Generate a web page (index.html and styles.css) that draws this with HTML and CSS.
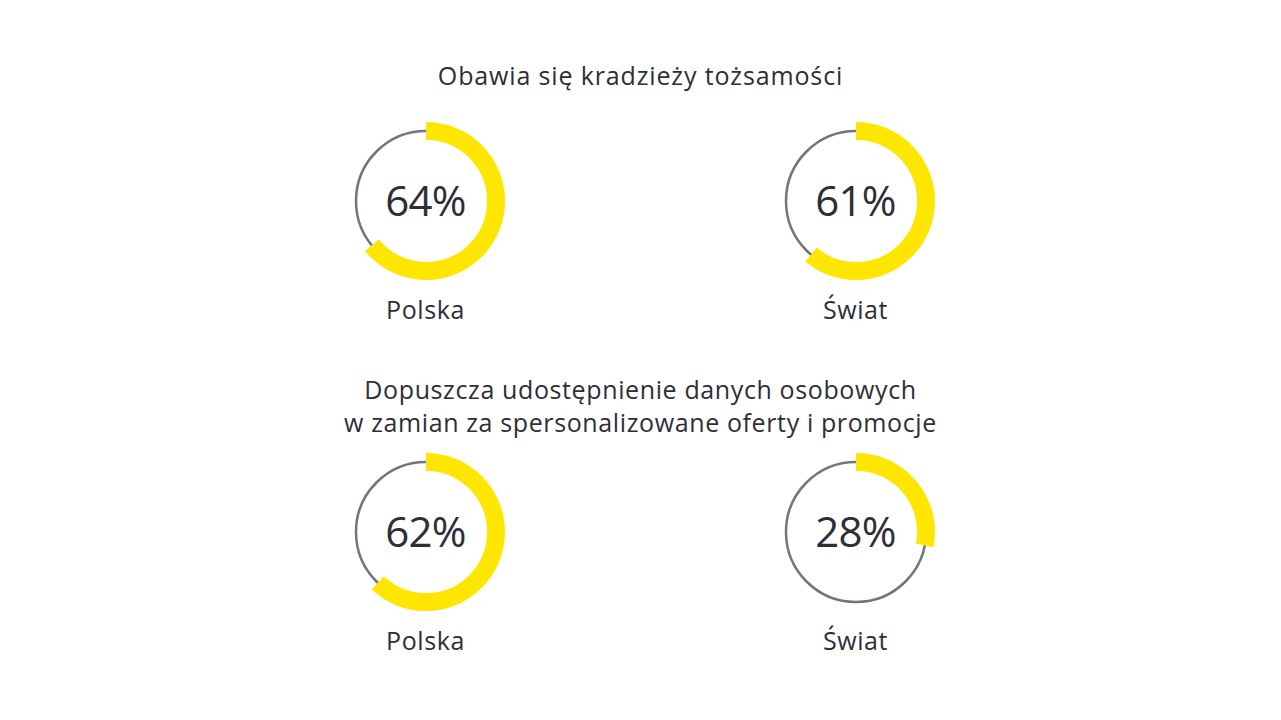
FILE: index.html
```html
<!DOCTYPE html>
<html lang="pl">
<head>
<meta charset="utf-8">
<title>Kradzież tożsamości</title>
<link rel="stylesheet" href="styles.css">
</head>
<body>
<main class="page">
  <section class="block block-first">
    <h2 class="title">Obawia się kradzieży tożsamości</h2>
    <div class="pair">
      <figure class="stat">
        <div class="donut">
          <svg viewBox="0 0 160 160" width="160" height="160" aria-hidden="true">
            <circle class="track" cx="80" cy="80" r="70"/>
            <circle class="value" cx="80" cy="80" r="70" style="stroke-dasharray: 281.5 439.9"/>
          </svg>
          <span class="num">64%</span>
        </div>
        <figcaption class="label">Polska</figcaption>
      </figure>
      <figure class="stat">
        <div class="donut">
          <svg viewBox="0 0 160 160" width="160" height="160" aria-hidden="true">
            <circle class="track" cx="80" cy="80" r="70"/>
            <circle class="value" cx="80" cy="80" r="70" style="stroke-dasharray: 268.3 439.9"/>
          </svg>
          <span class="num">61%</span>
        </div>
        <figcaption class="label">Świat</figcaption>
      </figure>
    </div>
  </section>
  <section class="block block-second">
    <h2 class="title">Dopuszcza udostępnienie danych osobowych<br>w zamian za spersonalizowane oferty i promocje</h2>
    <div class="pair">
      <figure class="stat">
        <div class="donut">
          <svg viewBox="0 0 160 160" width="160" height="160" aria-hidden="true">
            <circle class="track" cx="80" cy="80" r="70"/>
            <circle class="value" cx="80" cy="80" r="70" style="stroke-dasharray: 272.7 439.9"/>
          </svg>
          <span class="num">62%</span>
        </div>
        <figcaption class="label">Polska</figcaption>
      </figure>
      <figure class="stat">
        <div class="donut">
          <svg viewBox="0 0 160 160" width="160" height="160" aria-hidden="true">
            <circle class="track" cx="80" cy="80" r="70"/>
            <circle class="value" cx="80" cy="80" r="70" style="stroke-dasharray: 123.2 439.9"/>
          </svg>
          <span class="num">28%</span>
        </div>
        <figcaption class="label">Świat</figcaption>
      </figure>
    </div>
  </section>
</main>
</body>
</html>
```

FILE: styles.css
```css
html, body {
  margin: 0;
  padding: 0;
  background: #ffffff;
}

body {
  font-family: "Open Sans", "Liberation Sans", sans-serif;
  color: #2e2e38;
}

.page {
  width: 860px;
  margin: 0 auto;
  padding-top: 60px;
}

.block {
  display: flex;
  flex-direction: column;
  align-items: center;
}

.block-second {
  margin-top: 49px;
}

.title {
  margin: 0;
  font-weight: 400;
  font-size: 25px;
  line-height: 33px;
  letter-spacing: 0.62px;
  text-align: center;
}

.block-first .title {
  line-height: 30px;
  letter-spacing: 0.86px;
}

.pair {
  width: 100%;
  display: grid;
  grid-template-columns: 1fr 1fr;
  margin-top: 31px;
}

.block-second .pair {
  margin-top: 13px;
}

.stat {
  margin: 0;
  display: flex;
  flex-direction: column;
  align-items: center;
}

.donut {
  display: grid;
  place-items: center;
  width: 160px;
  height: 160px;
}

.donut svg,
.donut .num {
  grid-area: 1 / 1;
}

.donut svg {
  display: block;
}

.track {
  fill: none;
  stroke: #747480;
  stroke-width: 2.5;
}

.value {
  fill: none;
  stroke: #ffe600;
  stroke-width: 18;
  transform: rotate(-90deg);
  transform-origin: 80px 80px;
}

.num {
  font-size: 42px;
  line-height: 1;
  letter-spacing: -0.8px;
  padding-bottom: 2px;
}

.label {
  margin-top: 13px;
  font-size: 25px;
  line-height: 30px;
  letter-spacing: 0.6px;
}
```
